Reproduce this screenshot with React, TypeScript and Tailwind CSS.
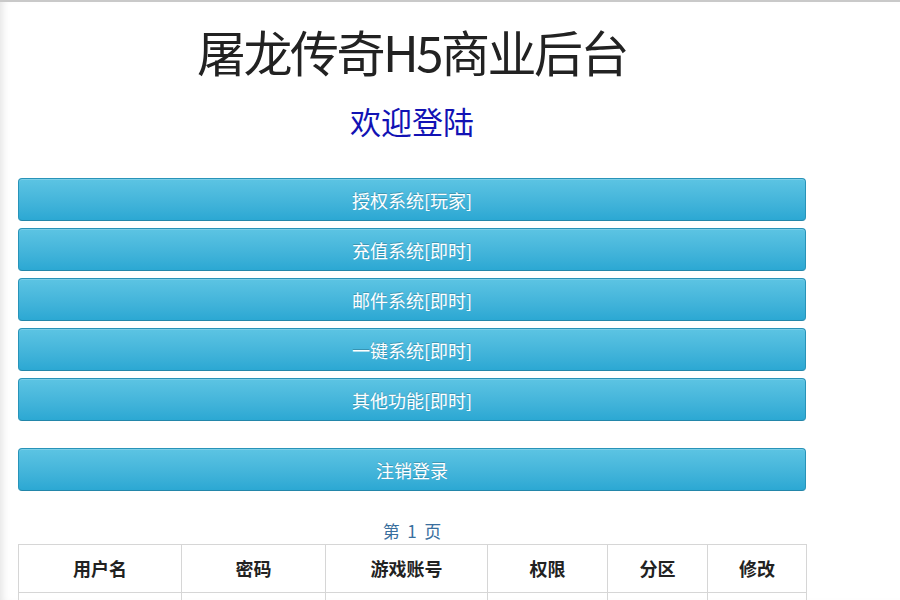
import React from "react";

const MENU = ["授权系统[玩家]", "充值系统[即时]", "邮件系统[即时]", "一键系统[即时]", "其他功能[即时]"];

const COLS = [
  { label: "用户名", w: "w-[163px]" },
  { label: "密码", w: "w-[144px]" },
  { label: "游戏账号", w: "w-[162px]" },
  { label: "权限", w: "w-[120px]" },
  { label: "分区", w: "w-[100px]" },
  { label: "修改", w: "w-[99px]" },
];

const FONT = "font-['Noto_Sans_CJK_SC','Noto_Sans',sans-serif]";

function InfoButton({ label }: { label: string }) {
  return (
    <button className="h-[43px] w-full rounded-[4px] border border-[#2893b8] border-b-[#2386a9] bg-gradient-to-b from-[#5cc4e3] to-[#2ba8d3] text-[18px] leading-none text-white [text-shadow:0_-1px_0_rgba(0,0,0,0.2)] shadow-[inset_0_1px_0_rgba(255,255,255,0.2)]">
      {label}
    </button>
  );
}

export default function App() {
  return (
    <div className={`h-[600px] w-[900px] overflow-hidden border-t-2 border-[#c9c9c9] bg-white ${FONT} shadow-[inset_8px_0_8px_-6px_rgba(0,0,0,0.12)]`}>
      <div className="ml-[18px] w-[788px]">
        {/* ── 标题 ── */}
        <h1 className="pt-[18px] text-center text-[49px] leading-[62px] text-[#222] tracking-[-2.5px]">
          屠龙传奇H5商业后台
        </h1>
        <h2 className="mt-[20px] text-center text-[31px] leading-[38px] text-[#1212b4]">欢迎登陆</h2>

        {/* ── 菜单 ── */}
        <div className="mt-[38px] flex flex-col gap-[7px]">
          {MENU.map((m) => (
            <InfoButton key={m} label={m} />
          ))}
        </div>
        <div className="mt-[27px]">
          <InfoButton label="注销登录" />
        </div>

        {/* ── 用户列表 ── */}
        <div className="mt-[28px] text-center text-[17px] leading-[24px] text-[#3a6f9e] whitespace-pre">第  1  页</div>
        <table className="mt-[1px] w-[788px] table-fixed border-collapse">
          <thead>
            <tr>
              {COLS.map((c) => (
                <th
                  key={c.label}
                  className={`${c.w} h-[48px] border border-[#d6d6d6] text-center text-[18px] font-bold text-[#222]`}
                >
                  {c.label}
                </th>
              ))}
            </tr>
          </thead>
          <tbody>
            <tr>
              {COLS.map((c) => (
                <td key={c.label} className="h-[40px] border border-[#d6d6d6]"></td>
              ))}
            </tr>
          </tbody>
        </table>
      </div>
    </div>
  );
}
